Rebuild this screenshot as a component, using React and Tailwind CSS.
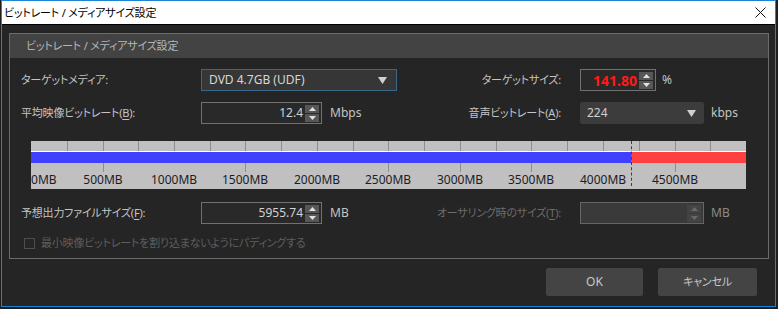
import React from 'react'

const PX_PER_MB = 0.143
const LIMIT_MB = 4196
const TOP_TICKS = Array.from({ length: 19 }, (_, i) => (i + 1) * 250)
const BOTTOM_TICKS = [500, 1500, 2500, 3000, 3500, 4500]
const LABELS = [0, 500, 1000, 1500, 2000, 2500, 3000, 3500, 4000, 4500]

// 日本語ラベル用（かなを詰める）
const JP = 'text-[11px] tracking-[-0.2px]'

const x = (mb) => Math.round(mb * PX_PER_MB)

const Tri = ({ dir = 'down', color = '#d8d8d8', w = 7, h = 4 }) => (
  <svg width={w} height={h} viewBox={`0 0 ${w} ${h}`}>
    <path d={dir === 'up' ? `M${w / 2} 0L${w} ${h}H0z` : `M0 0H${w}L${w / 2} ${h}z`} fill={color} />
  </svg>
)

const Spin = ({ disabled }) => (
  <div className="flex flex-col gap-px mr-[2px]">
    <div className={`w-[14px] h-[8px] flex items-center justify-center ${disabled ? 'bg-[#444]' : 'bg-[#575757]'}`}>
      <Tri dir="up" color={disabled ? '#6a6a6a' : '#e2e2e2'} />
    </div>
    <div className={`w-[14px] h-[8px] flex items-center justify-center ${disabled ? 'bg-[#444]' : 'bg-[#575757]'}`}>
      <Tri color={disabled ? '#6a6a6a' : '#e2e2e2'} />
    </div>
  </div>
)

const SpinBox = ({ value, className, red, disabled }) => (
  <div
    className={`h-[22px] flex items-center border ${disabled ? 'bg-[#3a3a3a] border-[#666]' : 'bg-[#292929] border-[#717171]'} ${className}`}
  >
    <span className={`flex-1 text-right pr-[2px] ${red ? 'text-[#ff1a1a] font-bold text-[14px]' : 'text-[#d2d2d2]'}`}>{value}</span>
    <Spin disabled={disabled} />
  </div>
)

const Key = ({ children }) => <span className="underline underline-offset-2">{children}</span>

const UsageBar = () => (
  <div className="relative ml-[10px] w-[715px] h-[48px] bg-[#c0c0c0] overflow-hidden">
    {TOP_TICKS.map((mb) => (
      <div key={mb} className="absolute top-0 w-px h-[10px] bg-[#8e8e8e]" style={{ left: x(mb) }} />
    ))}
    <div className="absolute top-[10px] left-0 right-0 h-px bg-white" />
    <div className="absolute top-[11px] left-0 h-[11px] bg-[#4040ff]" style={{ width: x(LIMIT_MB) }} />
    <div className="absolute top-[11px] right-0 h-[11px] bg-[#ff4040]" style={{ left: x(LIMIT_MB) }} />
    {BOTTOM_TICKS.map((mb) => (
      <div key={mb} className="absolute top-[22px] w-px h-[9px] bg-[#8e8e8e]" style={{ left: x(mb) }} />
    ))}
    {LABELS.map((mb) => (
      <div
        key={mb}
        className={`absolute top-[32px] leading-[14px] text-[#1c1c28] ${mb === 0 ? '' : '-translate-x-1/2'}`}
        style={{ left: x(mb) }}
      >
        {mb}MB
      </div>
    ))}
    <div className="absolute top-0 h-[45px] border-l border-dashed border-[#d40000]" style={{ left: x(LIMIT_MB) }} />
  </div>
)

export default function App() {
  return (
    <div className="w-[778px] h-[309px] bg-[#1e1e1e] overflow-hidden text-[12px] font-['Noto_Sans','Noto_Sans_CJK_JP',sans-serif] [font-feature-settings:'palt']">
      <div className="ml-px w-[775px] h-[307px] border border-[#1b84d6] bg-[#252525] flex flex-col">
        {/* タイトルバー */}
        <div className="h-[24px] bg-white border-b border-black flex items-center justify-between shrink-0">
          <span className={`pl-[2px] text-black leading-none ${JP}`}>ビットレート / メディアサイズ設定</span>
          <svg className="mr-[9px]" width="11" height="11" viewBox="0 0 11 11">
            <path d="M0.5 0.5L10.5 10.5M10.5 0.5L0.5 10.5" stroke="#111" strokeWidth="1" />
          </svg>
        </div>

        {/* グループボックス */}
        <div className="mt-[8px] ml-[7px] w-[760px] h-[226px] border border-[#6b6b6b] shrink-0">
          <div className={`h-[24px] bg-[#434343] flex items-center pl-[16px] text-[#b6b6b6] ${JP}`}>
            ビットレート / メディアサイズ設定
          </div>

          <div className="pl-[11px] text-[#c4c4c4]">
            {/* 行1 */}
            <div className="mt-[11px] flex items-center h-[22px]">
              <div className="w-[379px] flex items-center">
                <span className={`w-[180px] ${JP}`}>ターゲットメディア:</span>
                <div className="w-[196px] h-[22px] bg-[#363636] border border-[#3a6788] flex items-center justify-between pl-[7px] pr-[9px]">
                  <span className="text-[#d6d6d6]">DVD 4.7GB (UDF)</span>
                  <Tri w={9} h={7} color="#d0d0d0" />
                </div>
              </div>
              <span className={`w-[161px] text-right ${JP}`}>ターゲットサイズ:</span>
              <SpinBox value="141.80" red className="ml-[19px] w-[76px]" />
              <span className="ml-[6px]">%</span>
            </div>

            {/* 行2 */}
            <div className="mt-[11px] flex items-center h-[22px]">
              <div className="w-[379px] flex items-center">
                <span className={`w-[180px] ${JP}`}>
                  平均映像ビットレート(<Key>B</Key>):
                </span>
                <SpinBox value="12.4" className="w-[121px]" />
                <span className="ml-[8px]">Mbps</span>
              </div>
              <span className={`w-[161px] text-right ${JP}`}>
                音声ビットレート(<Key>A</Key>):
              </span>
              <div className="ml-[19px] w-[124px] h-[22px] bg-[#3c3c3c] rounded-[2px] flex items-center justify-between pl-[7px] pr-[8px]">
                <span className="text-[#cfcfcf]">224</span>
                <Tri w={9} h={7} color="#d0d0d0" />
              </div>
              <span className="ml-[7px]">kbps</span>
            </div>

            {/* 容量バー */}
            <div className="mt-[17px]">
              <UsageBar />
            </div>

            {/* 行3 */}
            <div className="mt-[13px] flex items-center h-[22px]">
              <div className="w-[379px] flex items-center">
                <span className={`w-[180px] ${JP}`}>
                  予想出力ファイルサイズ(<Key>F</Key>):
                </span>
                <SpinBox value="5955.74" className="w-[121px]" />
                <span className="ml-[8px]">MB</span>
              </div>
              <span className={`w-[161px] text-right text-[#6c6c6c] ${JP}`}>
                オーサリング時のサイズ(<Key>T</Key>):
              </span>
              <SpinBox value="" disabled className="ml-[19px] w-[124px]" />
              <span className="ml-[7px] text-[#8a8a8a]">MB</span>
            </div>

            {/* チェックボックス */}
            <div className="mt-[14px] flex items-center h-[11px]">
              <div className="ml-[3px] w-[11px] h-[11px] border border-[#4e4e4e] bg-[#262626]" />
              <span className={`ml-[6px] text-[#5e5e5e] ${JP}`}>最小映像ビットレートを割り込まないようにパディングする</span>
            </div>
          </div>
        </div>

        {/* ボタン */}
        <div className="mt-[9px] mr-[18px] flex justify-end gap-[15px]">
          <button className="w-[97px] h-[28px] bg-[#444] rounded-[2px] text-[#c8c8c8]">OK</button>
          <button className={`w-[99px] h-[28px] bg-[#444] rounded-[2px] text-[#c8c8c8] ${JP}`}>キャンセル</button>
        </div>
      </div>
    </div>
  )
}
